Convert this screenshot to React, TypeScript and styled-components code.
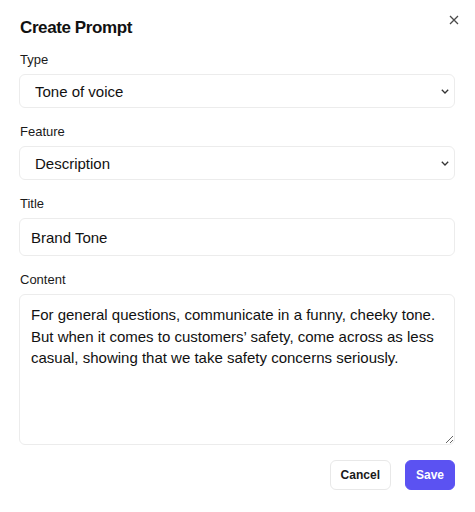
import { createGlobalStyle, styled } from 'styled-components';

const GlobalStyle = createGlobalStyle`
  html, body {
    margin: 0;
    background: #ffffff;
  }

  body {
    font-family: 'Liberation Sans', Arial, sans-serif;
    color: #111111;
  }
`;

interface SelectFieldProps {
  label: string;
  value: string;
  options: string[];
}

const SelectField = ({ label, value, options }: SelectFieldProps) => (
  <Field>
    <Label>{label}</Label>
    <SelectWrapper>
      <Select defaultValue={value}>
        {options.map((option) => (
          <option key={option}>{option}</option>
        ))}
      </Select>
      <Chevron viewBox="0 0 8 5" aria-hidden>
        <path d="M0.8 0.8L4 4l3.2-3.2" />
      </Chevron>
    </SelectWrapper>
  </Field>
);

const App = () => {
  return (
    <>
      <GlobalStyle />
      <Dialog>
        <Header>
          <Title>Create Prompt</Title>
          <CloseButton aria-label="Close">
            <svg viewBox="0 0 10 10" width="10" height="10">
              <path d="M1 1l8 8M9 1L1 9" />
            </svg>
          </CloseButton>
        </Header>

        <SelectField label="Type" value="Tone of voice" options={['Tone of voice', 'Style']} />
        <SelectField label="Feature" value="Description" options={['Description', 'Title']} />

        <Field>
          <Label>Title</Label>
          <TextInput defaultValue="Brand Tone" />
        </Field>

        <Field>
          <Label>Content</Label>
          <TextArea
            defaultValue={
              'For general questions, communicate in a funny, cheeky tone. But when it comes to customers\u2019 safety, come across as less casual, showing that we take safety concerns seriously.'
            }
          />
        </Field>

        <Footer>
          <Button>Cancel</Button>
          <Button primary>Save</Button>
        </Footer>
      </Dialog>
    </>
  );
};

export default App;

const Dialog = styled.div`
  display: flex;
  flex-direction: column;
  gap: 14px;
  width: 475px;
  box-sizing: border-box;
  padding: 16px 20px 20px 19px;
`;

const Header = styled.div`
  display: flex;
  justify-content: space-between;
  align-items: flex-start;
  margin-bottom: -4px;
`;

const Title = styled.h2`
  margin: 0;
  font-size: 17px;
  line-height: 24px;
  font-weight: 700;
  letter-spacing: -0.4px;
  padding-left: 1px;
`;

const CloseButton = styled.button`
  display: flex;
  padding: 0;
  margin: -1px -4px 0 0;
  border: none;
  background: none;
  cursor: pointer;

  svg {
    stroke: #4a4a4a;
    stroke-width: 1.3;
    fill: none;
  }
`;

const Field = styled.div`
  display: flex;
  flex-direction: column;
  gap: 4px;
`;

const Label = styled.label`
  font-size: 13px;
  line-height: 20px;
  padding-left: 1px;
  color: #1a1a1a;
`;

const SelectWrapper = styled.div`
  position: relative;
`;

const Select = styled.select`
  appearance: none;
  width: 100%;
  height: 34px;
  padding: 0 32px 0 15px;
  border: 1px solid #ececec;
  border-radius: 6px;
  background: #ffffff;
  font-family: inherit;
  font-size: 15px;
  color: #111111;
  outline: none;
`;

const Chevron = styled.svg`
  position: absolute;
  top: 15px;
  right: 6px;
  width: 8px;
  height: 5px;
  fill: none;
  stroke: #333333;
  stroke-width: 1.3;
  pointer-events: none;
`;

const TextInput = styled.input`
  height: 38px;
  box-sizing: border-box;
  padding: 0 11px;
  border: 1px solid #ececec;
  border-radius: 6px;
  font-family: inherit;
  font-size: 15px;
  color: #111111;
  outline: none;
`;

const TextArea = styled.textarea`
  height: 151px;
  box-sizing: border-box;
  padding: 9px 11px;
  border: 1px solid #ececec;
  border-radius: 6px;
  font-family: inherit;
  font-size: 15px;
  line-height: 21.7px;
  color: #111111;
  outline: none;
`;

const Footer = styled.div`
  display: flex;
  justify-content: flex-end;
  gap: 14px;
  margin-top: 1px;
`;

const Button = styled.button<{ primary?: boolean }>`
  height: 30px;
  padding: 0 10px;
  border-radius: 6px;
  border: 1px solid ${({ primary }) => (primary ? '#5b52f2' : '#e8e8e8')};
  background: ${({ primary }) => (primary ? '#5b52f2' : '#ffffff')};
  color: ${({ primary }) => (primary ? '#ffffff' : '#1a1a1a')};
  font-family: inherit;
  font-size: 12px;
  font-weight: 700;
  cursor: pointer;
`;
